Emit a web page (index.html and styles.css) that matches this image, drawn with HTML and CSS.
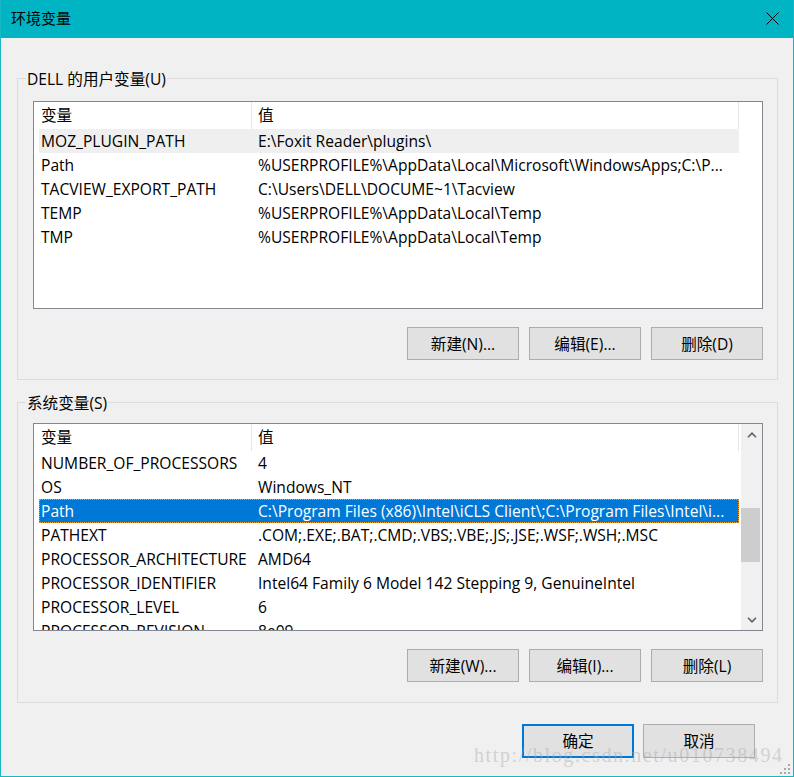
FILE: index.html
```html
<!DOCTYPE html>
<html lang="zh-CN">
<head>
<meta charset="utf-8">
<title>环境变量</title>
<link rel="stylesheet" href="styles.css">
</head>
<body>
<div class="window">
  <div class="titlebar">
    <span class="title">环境变量</span>
    <svg class="close" width="13" height="13" viewBox="0 0 13 13"><path d="M0.5 0.5 L12.5 12.5 M12.5 0.5 L0.5 12.5" stroke="#000" stroke-width="1" fill="none"/></svg>
  </div>
  <div class="content">
    <div class="group g1">
      <div class="legend">DELL 的用户变量(U)</div>
      <div class="list">
        <div class="listmain">
          <div class="header"><div class="hc c1">变量</div><div class="hc c2">值</div></div>
          <div class="row hover"><div class="cell c1">MOZ_PLUGIN_PATH</div><div class="cell c2">E:\Foxit Reader\plugins\</div></div>
          <div class="row"><div class="cell c1">Path</div><div class="cell c2">%USERPROFILE%\AppData\Local\Microsoft\WindowsApps;C:\P...</div></div>
          <div class="row"><div class="cell c1">TACVIEW_EXPORT_PATH</div><div class="cell c2">C:\Users\DELL\DOCUME~1\Tacview</div></div>
          <div class="row"><div class="cell c1">TEMP</div><div class="cell c2">%USERPROFILE%\AppData\Local\Temp</div></div>
          <div class="row"><div class="cell c1">TMP</div><div class="cell c2">%USERPROFILE%\AppData\Local\Temp</div></div>
        </div>
      </div>
      <div class="btnrow">
        <button class="btn">新建(N)...</button>
        <button class="btn">编辑(E)...</button>
        <button class="btn">删除(D)</button>
      </div>
    </div>
    <div class="group g2">
      <div class="legend">系统变量(S)</div>
      <div class="list">
        <div class="listmain">
          <div class="header"><div class="hc c1">变量</div><div class="hc c2">值</div></div>
          <div class="row"><div class="cell c1">NUMBER_OF_PROCESSORS</div><div class="cell c2">4</div></div>
          <div class="row"><div class="cell c1">OS</div><div class="cell c2">Windows_NT</div></div>
          <div class="row selected"><div class="cell c1">Path</div><div class="cell c2">C:\Program Files (x86)\Intel\iCLS Client\;C:\Program Files\Intel\i...</div></div>
          <div class="row"><div class="cell c1">PATHEXT</div><div class="cell c2">.COM;.EXE;.BAT;.CMD;.VBS;.VBE;.JS;.JSE;.WSF;.WSH;.MSC</div></div>
          <div class="row"><div class="cell c1">PROCESSOR_ARCHITECTURE</div><div class="cell c2">AMD64</div></div>
          <div class="row"><div class="cell c1">PROCESSOR_IDENTIFIER</div><div class="cell c2">Intel64 Family 6 Model 142 Stepping 9, GenuineIntel</div></div>
          <div class="row"><div class="cell c1">PROCESSOR_LEVEL</div><div class="cell c2">6</div></div>
          <div class="row"><div class="cell c1">PROCESSOR_REVISION</div><div class="cell c2">8e09</div></div>
        </div>
        <div class="scrollbar">
          <div class="sbtn"><svg width="10" height="6" viewBox="0 0 10 6"><path d="M1 5.2 L5 1.2 L9 5.2" stroke="#606060" stroke-width="1.6" fill="none"/></svg></div>
          <div class="track"><div class="thumb"></div></div>
          <div class="sbtn"><svg width="10" height="6" viewBox="0 0 10 6"><path d="M1 0.8 L5 4.8 L9 0.8" stroke="#606060" stroke-width="1.6" fill="none"/></svg></div>
        </div>
      </div>
      <div class="btnrow">
        <button class="btn">新建(W)...</button>
        <button class="btn">编辑(I)...</button>
        <button class="btn">删除(L)</button>
      </div>
    </div>
    <div class="dlgrow">
      <button class="btn default">确定</button>
      <button class="btn">取消</button>
    </div>
  </div>
  <div class="watermark">http://blog.csdn.net/u010738494</div>
  <svg class="grip" width="11" height="11" viewBox="0 0 11 11">
    <rect x="8" y="0" width="2" height="2" fill="#a8a8a8"/>
    <rect x="4" y="4" width="2" height="2" fill="#a8a8a8"/>
    <rect x="8" y="4" width="2" height="2" fill="#a8a8a8"/>
    <rect x="0" y="8" width="2" height="2" fill="#a8a8a8"/>
    <rect x="4" y="8" width="2" height="2" fill="#a8a8a8"/>
    <rect x="8" y="8" width="2" height="2" fill="#a8a8a8"/>
  </svg>
</div>
</body>
</html>
```

FILE: styles.css
```css
* { box-sizing: border-box; }
html, body { margin: 0; padding: 0; background: #f0f0f0; }
body {
  font-family: "Open Sans", "Noto Sans CJK SC", sans-serif;
  font-size: 15.6px;
  color: #000;
}
.window {
  position: relative;
  width: 794px;
  height: 777px;
  background: #f0f0f0;
  border: 1px solid #19b6c4;
  border-top: none;
  overflow: hidden;
}
.titlebar {
  height: 38px;
  margin: 0 -1px;
  background: #00b4c3;
  display: flex;
  align-items: center;
  justify-content: space-between;
  padding: 0 15px 0 11px;
}
.title {
  font-family: "Noto Sans CJK SC", sans-serif;
  font-size: 15px;
  line-height: 20px;
  margin-top: -2px;
}
.close { display: block; margin-top: -1px; }
.content {
  padding: 40px 15px 0 16px;
}
.group {
  border: 1px solid #dcdcdc;
  padding: 0 14px 19px 15px;
}
.g2 { margin-top: 22px; padding-bottom: 20px; }
.legend {
  width: fit-content;
  height: 20px;
  line-height: 20px;
  margin: -10px 0 12px -7px;
  padding: 0 1px;
  background: #f0f0f0;
  white-space: nowrap;
}
.g2 .legend { margin-bottom: 10px; }
.list {
  height: 208px;
  border: 1px solid #828790;
  background: #fff;
  display: flex;
  overflow: hidden;
}
.listmain {
  flex: 1;
  min-width: 0;
  overflow: hidden;
}
.header {
  display: flex;
  height: 27px;
  width: 705px;
}
.hc {
  line-height: 27px;
  white-space: nowrap;
}
.hc.c1 {
  width: 218px;
  padding-left: 7px;
  border-right: 1px solid #e5e5e5;
}
.hc.c2 {
  width: 487px;
  padding-left: 6px;
  border-right: 1px solid #e5e5e5;
}
.row {
  display: flex;
  height: 24px;
  width: 700px;
  margin-left: 5px;
  line-height: 24px;
  white-space: nowrap;
}
.row.hover { background: #efefef; }
.row.selected {
  background: #0078d7;
  color: #fff;
  outline: 1px dotted #f39a2c;
  outline-offset: -1px;
}
.cell { overflow: hidden; }
.cell.c1 { width: 212px; padding-left: 2px; flex: none; }
.cell.c2 { flex: 1; padding-left: 7px; }
.scrollbar {
  width: 21px;
  flex: none;
  background: #f0f0f0;
  display: flex;
  flex-direction: column;
}
.sbtn {
  height: 21px;
  display: flex;
  align-items: center;
  justify-content: center;
}
.sbtn svg { display: block; }
.track { flex: 1; }
.thumb {
  margin-top: 63px;
  height: 54px;
  width: 19px;
  background: #cdcdcd;
}
.btnrow {
  display: flex;
  justify-content: flex-end;
  gap: 10px;
  margin-top: 18px;
}
.btn {
  width: 112px;
  height: 33px;
  border: 1px solid #adadad;
  background: #e1e1e1;
  font-family: "Open Sans", "Noto Sans CJK SC", sans-serif;
  font-size: 15.6px;
  color: #000;
  padding: 0;
  margin: 0;
  line-height: 20px;
}
.dlgrow {
  display: flex;
  justify-content: flex-end;
  gap: 9px;
  margin-top: 21px;
  padding-right: 23px;
}
.dlgrow .btn { height: 34px; }
.btn.default { border: 2px solid #0078d7; }
.watermark {
  position: absolute;
  left: 473px;
  top: 744px;
  font-family: "Liberation Serif", serif;
  font-size: 20px;
  letter-spacing: 1.6px;
  color: rgba(170, 170, 170, 0.45);
  white-space: nowrap;
}
.grip {
  position: absolute;
  right: 2px;
  bottom: 1px;
}
```
